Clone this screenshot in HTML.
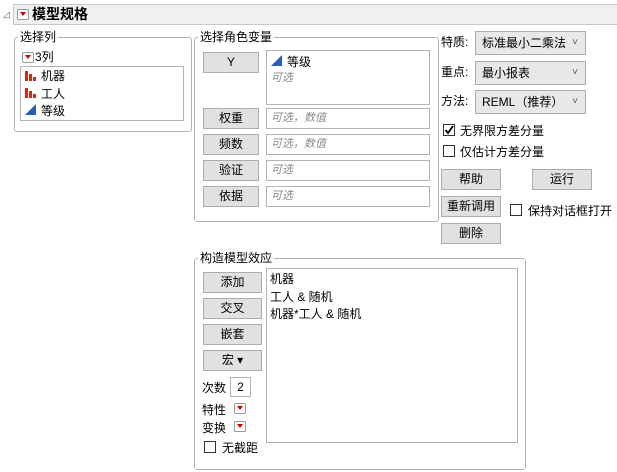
<!DOCTYPE html>
<html><head><meta charset="utf-8"><style>
body{margin:0;width:617px;height:472px;background:#fff;font-family:"Liberation Sans","Noto Sans CJK SC",sans-serif;font-size:12px;color:#000;position:relative;overflow:hidden}
.a{position:absolute}
.grp{position:absolute;border:1px solid #b4b4b4;border-radius:3px}
.gt{position:absolute;background:#fff;padding:0 2px;font-size:12px;line-height:14px}
.btn{position:absolute;background:#e1e1e1;border:1px solid #adadad;box-sizing:border-box;text-align:center;font-size:12px;line-height:18px}
.box{position:absolute;border:1px solid #b4b4b4;box-sizing:border-box;background:#fff}
.ph{color:#8a8a8a;font-style:italic;font-size:11px;padding-left:4px;line-height:18px}
.dd{position:absolute;background:#e8e8e8;border:1px solid #adadad;box-sizing:border-box;font-size:12px;line-height:22px;padding-left:6px}
.dd:after{content:"˅";position:absolute;right:7px;top:0;color:#555;font-size:10px}
.cb{position:absolute;width:12px;height:12px;border:1px solid #333;background:#fff;box-sizing:border-box}
.rm{position:absolute;width:12px;height:11px;border:1px solid #999;border-radius:2px;background:#fff;box-sizing:border-box}
.rm:after{content:"";position:absolute;left:2px;top:2px;border-left:3.5px solid transparent;border-right:3.5px solid transparent;border-top:4px solid #c00}
</style></head><body>
<div class="a" style="left:3px;top:9px;font-size:9px;color:#666">◿</div>
<div class="a" style="left:13px;top:4px;width:604px;height:21px;background:#f0f0f0;border:1px solid #c8c8c8;border-right:none;box-sizing:border-box"></div>
<div class="rm" style="left:17px;top:9px;width:12px;height:11px"></div>
<div class="a" style="left:32px;top:6px;font-size:14px;font-weight:bold;line-height:17px">模型规格</div>

<div class="grp" style="left:14px;top:37px;width:176px;height:93px"></div>
<div class="gt" style="left:18px;top:30px">选择列</div>
<div class="rm" style="left:22px;top:52px"></div>
<div class="a" style="left:35px;top:50px;line-height:14px">3列</div>
<div class="box" style="left:20px;top:66px;width:164px;height:55px"></div>
<svg class="a" style="left:25px;top:69px" width="12" height="48">
<g fill="#c0301c"><rect x="0" y="2" width="3" height="10"/><rect x="4" y="5" width="3" height="7"/><rect x="8" y="8" width="3" height="4"/>
<rect x="0" y="19" width="3" height="10"/><rect x="4" y="22" width="3" height="7"/><rect x="8" y="25" width="3" height="4"/></g>
<polygon points="0,46 11,35 11,46" fill="#2a5db8"/></svg>
<div class="a" style="left:41px;top:68px;line-height:17.5px">机器<br>工人<br>等级</div>

<div class="grp" style="left:194px;top:37px;width:243px;height:183px"></div>
<div class="gt" style="left:198px;top:30px">选择角色变量</div>
<div class="btn" style="left:203px;top:52px;width:56px;height:21px">Y</div>
<div class="box" style="left:266px;top:50px;width:164px;height:55px"></div>
<svg class="a" style="left:271px;top:55px" width="12" height="12"><polygon points="0,11 11,0 11,11" fill="#2a5db8"/></svg>
<div class="a" style="left:287px;top:53px">等级</div>
<div class="a ph" style="left:267px;top:69px">可选</div>
<div class="btn" style="left:203px;top:108px;width:56px;height:21px">权重</div>
<div class="box ph" style="left:266px;top:108px;width:164px;height:21px">可选，数值</div>
<div class="btn" style="left:203px;top:134px;width:56px;height:21px">频数</div>
<div class="box ph" style="left:266px;top:134px;width:164px;height:21px">可选，数值</div>
<div class="btn" style="left:203px;top:160px;width:56px;height:21px">验证</div>
<div class="box ph" style="left:266px;top:160px;width:164px;height:21px">可选</div>
<div class="btn" style="left:203px;top:186px;width:56px;height:21px">依据</div>
<div class="box ph" style="left:266px;top:186px;width:164px;height:21px">可选</div>

<div class="a" style="left:441px;top:33px">特质:</div>
<div class="dd" style="left:475px;top:31px;width:111px;height:24px">标准最小二乘法</div>
<div class="a" style="left:441px;top:63px">重点:</div>
<div class="dd" style="left:475px;top:61px;width:111px;height:24px">最小报表</div>
<div class="a" style="left:441px;top:92px">方法:</div>
<div class="dd" style="left:475px;top:90px;width:111px;height:24px">REML（推荐）</div>
<div class="cb" style="left:443px;top:124px"></div>
<svg class="a" style="left:443px;top:124px" width="12" height="12"><path d="M2.5 6 L5 9 L10 2" stroke="#000" stroke-width="1.8" fill="none"/></svg>
<div class="a" style="left:460px;top:122px">无界限方差分量</div>
<div class="cb" style="left:443px;top:145px"></div>
<div class="a" style="left:460px;top:143px">仅估计方差分量</div>
<div class="btn" style="left:441px;top:169px;width:60px;height:21px">帮助</div>
<div class="btn" style="left:532px;top:169px;width:60px;height:21px">运行</div>
<div class="btn" style="left:441px;top:196px;width:60px;height:21px">重新调用</div>
<div class="cb" style="left:510px;top:204px"></div>
<div class="a" style="left:528px;top:202px">保持对话框打开</div>
<div class="btn" style="left:441px;top:223px;width:60px;height:21px">删除</div>

<div class="grp" style="left:194px;top:258px;width:330px;height:210px"></div>
<div class="gt" style="left:198px;top:251px">构造模型效应</div>
<div class="btn" style="left:203px;top:272px;width:59px;height:21px">添加</div>
<div class="btn" style="left:203px;top:298px;width:59px;height:21px">交叉</div>
<div class="btn" style="left:203px;top:324px;width:59px;height:21px">嵌套</div>
<div class="btn" style="left:203px;top:350px;width:59px;height:21px">宏 ▾</div>
<div class="a" style="left:202px;top:379px">次数</div>
<div class="box" style="left:230px;top:377px;width:21px;height:20px;text-align:center;line-height:18px">2</div>
<div class="a" style="left:202px;top:401px">特性</div><div class="rm" style="left:234px;top:403px"></div>
<div class="a" style="left:202px;top:419px">变换</div><div class="rm" style="left:234px;top:421px"></div>
<div class="cb" style="left:204px;top:441px"></div>
<div class="a" style="left:222px;top:439px">无截距</div>
<div class="box" style="left:266px;top:268px;width:252px;height:175px"></div>
<div class="a" style="left:270px;top:271px;line-height:17.5px">机器<br>工人 &amp; 随机<br>机器*工人 &amp; 随机</div>
</body></html>
